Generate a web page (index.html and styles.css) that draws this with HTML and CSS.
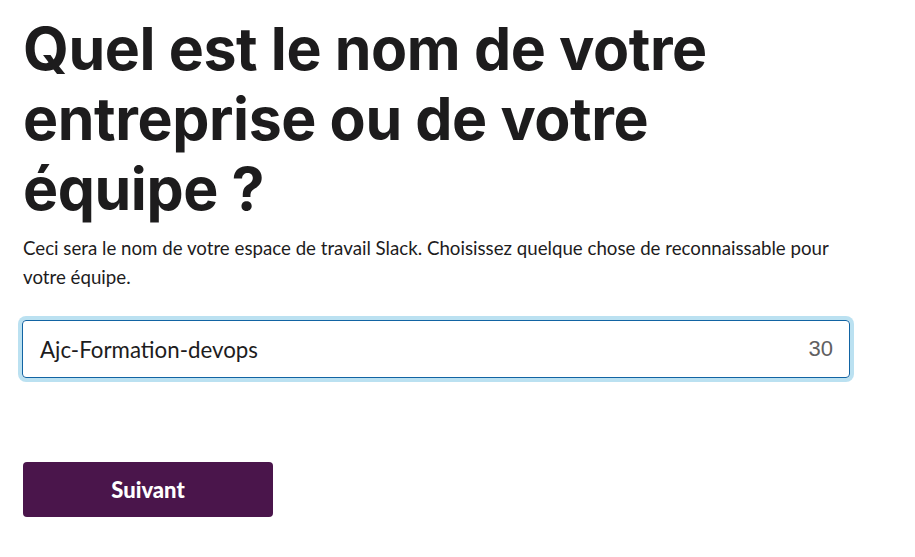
FILE: index.html
```html
<!DOCTYPE html>
<html lang="fr">
<head>
<meta charset="utf-8">
<link rel="stylesheet" href="styles.css">
</head>
<body>
<main class="page">
  <h1 class="title">Quel est le nom de votre entreprise ou de votre équipe ?</h1>
  <p class="lead">Ceci sera le nom de votre espace de travail Slack. Choisissez quelque chose de reconnaissable pour votre équipe.</p>
  <div class="field">
    <span class="field-value">Ajc-Formation-devops</span>
    <span class="field-count">30</span>
  </div>
  <button class="next" type="button">Suivant</button>
</main>
</body>
</html>
```
FILE: styles.css
```css
html, body {
  margin: 0;
  padding: 0;
  background: #fff;
}
.page {
  padding: 14px 0 0 23px;
  width: 830px;
  display: flex;
  flex-direction: column;
  align-items: flex-start;
}
.title {
  margin: 0;
  font-family: "Inter", sans-serif;
  font-weight: 700;
  font-size: 59px;
  line-height: 70px;
  letter-spacing: -0.4px;
  color: #1d1c1d;
  width: 720px;
}
.lead {
  margin: 10px 0 0;
  font-family: "Lato", sans-serif;
  font-size: 18.7px;
  line-height: 29px;
  color: #1d1c1d;
  width: 830px;
}
.field {
  margin-top: 28px;
  margin-left: -1px;
  box-sizing: border-box;
  width: 828px;
  height: 58px;
  border: 1px solid #1264a3;
  border-radius: 4px;
  box-shadow: 0 0 0 4px rgba(29, 155, 209, 0.3);
  display: flex;
  align-items: center;
  justify-content: space-between;
  padding: 0 16px 0 17px;
}
.field-value {
  font-family: "Lato", sans-serif;
  font-size: 22.3px;
  color: #1d1c1d;
}
.field-count {
  font-family: "Liberation Sans", Arial, sans-serif;
  font-size: 22px;
  color: #616061;
}
.next {
  margin-top: 84px;
  width: 250px;
  height: 55px;
  border: none;
  border-radius: 4px;
  background: #4a154b;
  color: #fff;
  font-family: "Lato", sans-serif;
  font-weight: 900;
  font-size: 22px;
  padding: 0;
}
```
